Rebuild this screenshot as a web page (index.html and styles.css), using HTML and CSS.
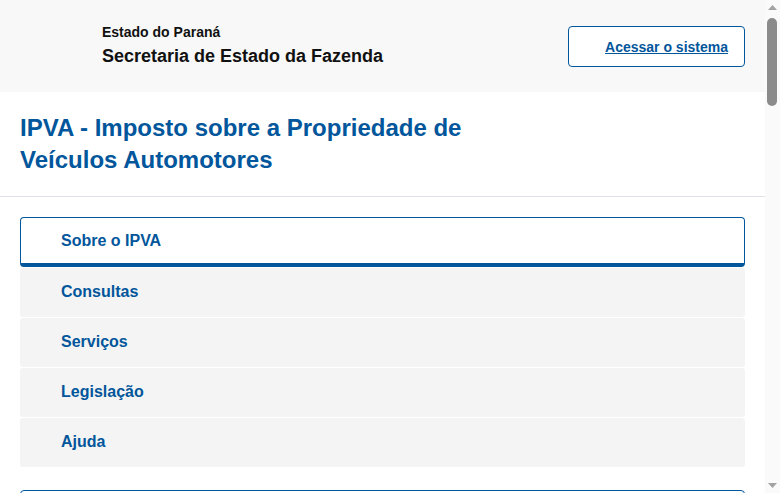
FILE: index.html
```html
<!DOCTYPE html>
<html lang="pt-BR">
<head>
<meta charset="utf-8">
<title>IPVA - Secretaria de Estado da Fazenda</title>
<link rel="stylesheet" href="styles.css">
</head>
<body>
<header class="topbar">
  <div class="brand">
    <div class="brand-state">Estado do Paraná</div>
    <div class="brand-org">Secretaria de Estado da Fazenda</div>
  </div>
  <a class="access-btn" href="#"><span>Acessar o sistema</span></a>
</header>
<main class="page">
  <div class="title-bar">
    <h1 class="title">IPVA - Imposto sobre a Propriedade de Veículos Automotores</h1>
  </div>
  <nav class="menu">
    <a class="menu-item active" href="#">Sobre o IPVA</a>
    <a class="menu-item" href="#">Consultas</a>
    <a class="menu-item" href="#">Serviços</a>
    <a class="menu-item" href="#">Legislação</a>
    <a class="menu-item" href="#">Ajuda</a>
  </nav>
  <section class="content-box">
    <h2 class="box-title">Sobre o IPVA</h2>
    <p class="box-text">O Imposto sobre a Propriedade de Veículos Automotores é cobrado anualmente dos proprietários de veículos registrados no Estado do Paraná.</p>
  </section>
</main>
<div class="fake-scrollbar" aria-hidden="true">
  <svg class="sb-arrow" width="15" height="15" viewBox="0 0 15 15"><polygon points="3,10 7.5,5 12,10" fill="#a3a3a3"/></svg>
  <div class="sb-track"><div class="sb-thumb"></div></div>
  <svg class="sb-arrow" width="15" height="15" viewBox="0 0 15 15"><polygon points="3,5 12,5 7.5,10" fill="#a3a3a3"/></svg>
</div>
</body>
</html>
```
FILE: styles.css
```css
html, body {
  margin: 0;
  padding: 0;
}
body {
  font-family: "Liberation Sans", Arial, sans-serif;
  color: #1a1a1a;
  background: #ffffff;
  margin-right: 15px;
}
.fake-scrollbar {
  position: fixed;
  top: 0;
  right: 0;
  width: 15px;
  height: 100vh;
  background: #fafafa;
  display: flex;
  flex-direction: column;
}
.sb-arrow {
  display: block;
  flex: none;
}
.sb-track {
  flex: 1;
  padding: 3px 3px 0 2px;
}
.sb-thumb {
  height: 88px;
  background: #8b8b8b;
  border-radius: 5px;
}
.topbar {
  height: 92px;
  background: #f8f8f8;
  display: flex;
  align-items: flex-start;
  justify-content: space-between;
  padding: 0 20px 0 102px;
  box-sizing: border-box;
}
.brand {
  padding-top: 23px;
}
.brand-state {
  font-size: 14px;
  font-weight: bold;
  line-height: 18px;
  color: #111;
}
.brand-org {
  margin-top: 4px;
  font-size: 18px;
  font-weight: bold;
  line-height: 22px;
  color: #111;
}
.access-btn {
  margin-top: 26px;
  width: 177px;
  height: 41px;
  box-sizing: border-box;
  border: 1px solid #02569b;
  border-radius: 4px;
  background: #fff;
  display: flex;
  align-items: center;
  justify-content: flex-end;
  padding-right: 16px;
  color: #02569b;
  font-size: 14px;
  font-weight: bold;
  text-decoration: underline;
}
.page {
  min-height: 2340px;
}
.title-bar {
  padding: 20px;
  border-bottom: 1px solid #dfe3e8;
}
.title {
  margin: 0;
  max-width: 450px;
  font-size: 24px;
  line-height: 32px;
  font-weight: bold;
  color: #02569b;
}
.menu {
  margin: 20px 20px 0 20px;
  display: flex;
  flex-direction: column;
  gap: 1px;
}
.menu-item {
  display: flex;
  align-items: center;
  height: 49px;
  padding-left: 41px;
  padding-bottom: 2px;
  background: #f4f4f4;
  border-radius: 3px;
  color: #02569b;
  font-size: 16px;
  font-weight: bold;
  text-decoration: none;
  box-sizing: border-box;
}
.menu-item.active {
  background: #fff;
  border: 1px solid #02569b;
  border-bottom: 4px solid #02569b;
  border-radius: 4px;
  padding-left: 40px;
  height: 50px;
  padding-bottom: 0;
}
.content-box {
  margin: 23px 20px 0 20px;
  border: 1px solid #02569b;
  border-radius: 4px;
  padding: 20px;
}
.box-title {
  margin: 0 0 10px;
  font-size: 20px;
  color: #02569b;
}
.box-text {
  margin: 0;
  font-size: 16px;
  line-height: 24px;
}
```
